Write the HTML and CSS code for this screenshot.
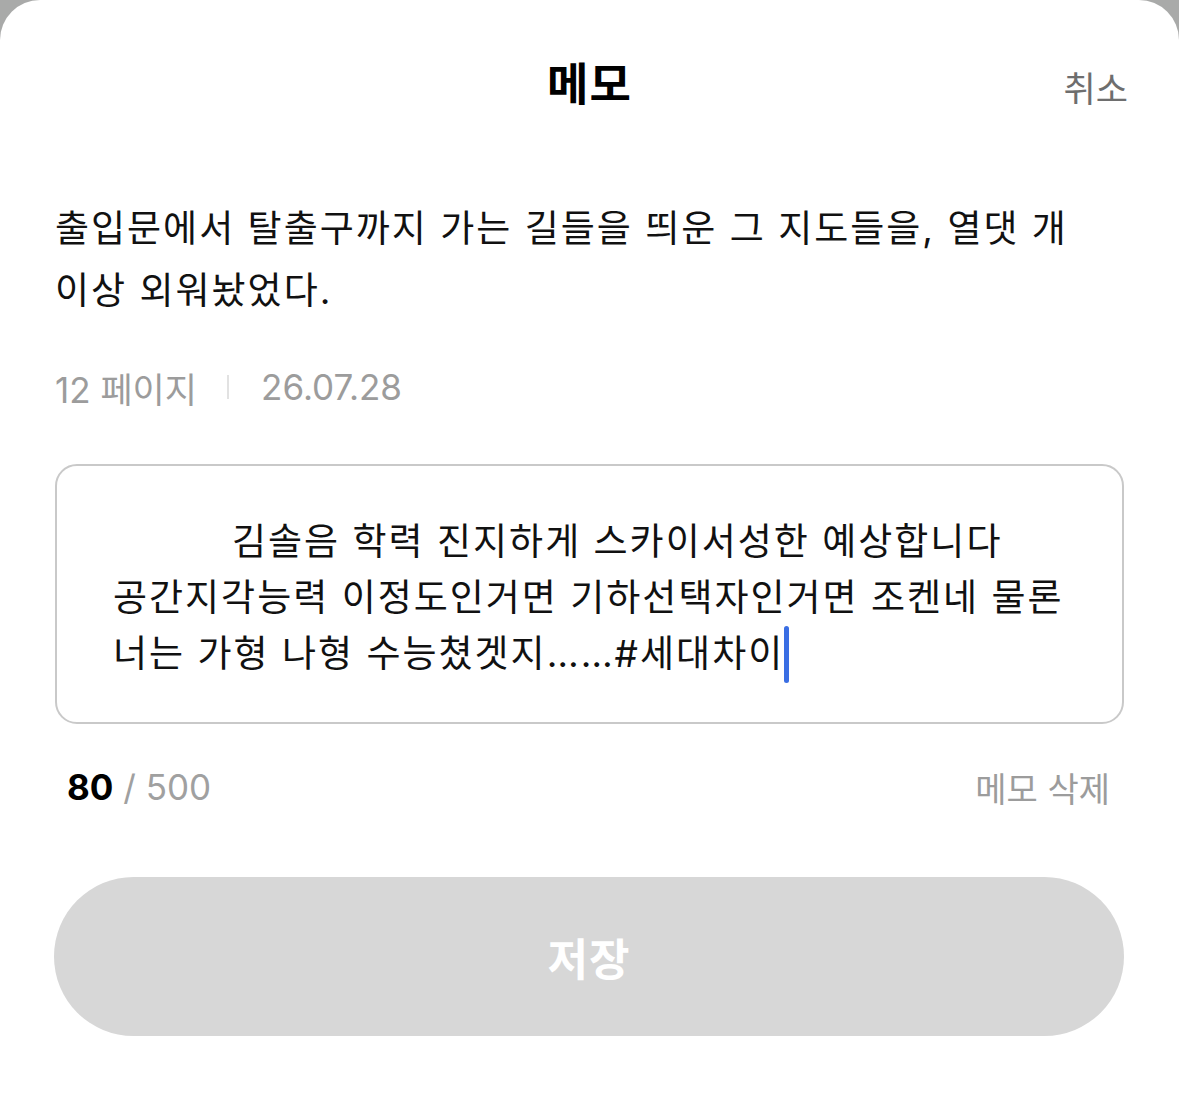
FILE: index.html
```html
<!DOCTYPE html>
<html lang="ko">
<head>
  <meta charset="UTF-8">
  <title>메모</title>
  <link rel="stylesheet" href="styles.css">
</head>
<body>
  <div class="sheet">
    <header class="sheet-header">
      <span></span>
      <h1 class="sheet-title">메모</h1>
      <a href="#" class="cancel">취소</a>
    </header>

    <p class="quote">출입문에서 탈출구까지 가는 길들을 띄운 그 지도들을, 열댓 개<br>이상 외워놨었다.</p>

    <div class="meta">
      <span>12 페이지</span>
      <span class="meta-sep"></span>
      <span>26.07.28</span>
    </div>

    <div class="memo-box">
      <div class="memo-text">김솔음 학력 진지하게 스카이서성한 예상합니다<br>공간지각능력 이정도인거면 기하선택자인거면 조켄네 물론<br>너는 가형 나형 수능쳤겟지……#세대차이<span class="caret"></span></div>
    </div>

    <div class="memo-footer">
      <div class="counter"><b>80</b> / 500</div>
      <a href="#" class="delete">메모 삭제</a>
    </div>

    <button class="save" disabled>저장</button>
  </div>
</body>
</html>
```

FILE: styles.css
```css
body {
  margin: 0;
  padding: 0;
  background: #a9aaa9;
  font-family: "Inter", "Noto Sans CJK KR", sans-serif;
  color: #111;
}

.sheet {
  background: #ffffff;
  border-radius: 40px 40px 0 0;
  min-height: 100vh;
  padding: 0 55px;
  box-sizing: border-box;
  overflow: hidden;
}

.sheet-header {
  display: grid;
  grid-template-columns: 1fr auto 1fr;
  align-items: center;
  height: 168px;
}

.sheet-title {
  margin: 0;
  font-size: 45px;
  font-weight: 700;
  line-height: 1;
  color: #000;
  letter-spacing: 1px;
}

.cancel {
  justify-self: end;
  margin-right: -4px;
  margin-top: 4px;
  font-size: 35px;
  color: #6e6e6e;
  text-decoration: none;
}

.quote {
  margin: 30px 0 0;
  font-size: 37px;
  line-height: 62px;
  letter-spacing: 2px;
  color: #111;
}

.meta {
  display: flex;
  align-items: center;
  margin-top: 45px;
  height: 40px;
  font-size: 35px;
  color: #9c9c9c;
}

.meta-sep {
  width: 2px;
  height: 24px;
  background: #e2e2e2;
  margin: 0 32px 0 30px;
}

.memo-box {
  margin-top: 57px;
  border: 2px solid #c9c9c9;
  border-radius: 22px;
  padding: 48px 56px 39px;
}

.memo-text {
  font-size: 37px;
  line-height: 56px;
  letter-spacing: 2px;
  text-indent: 119px;
  color: #111;
  white-space: nowrap;
}

.caret {
  display: inline-block;
  width: 5px;
  height: 57px;
  margin-left: 0;
  border-radius: 3px;
  background: #3a6ee3;
  vertical-align: -16px;
}

.memo-footer {
  display: flex;
  justify-content: space-between;
  align-items: center;
  margin-top: 43px;
  height: 40px;
  padding: 0 14px 0 12px;
}

.counter {
  font-size: 35px;
  color: #a0a0a0;
}

.counter b {
  color: #000;
  font-weight: 700;
}

.delete {
  font-size: 34px;
  color: #9c9c9c;
  text-decoration: none;
}

.save {
  display: block;
  width: calc(100% + 1px);
  margin: 70px 0 0 -1px;
  height: 159px;
  border: none;
  border-radius: 80px;
  background: #d7d7d7;
  color: #ffffff;
  font-family: inherit;
  font-size: 44px;
  font-weight: 700;
  letter-spacing: 1px;
}
```
